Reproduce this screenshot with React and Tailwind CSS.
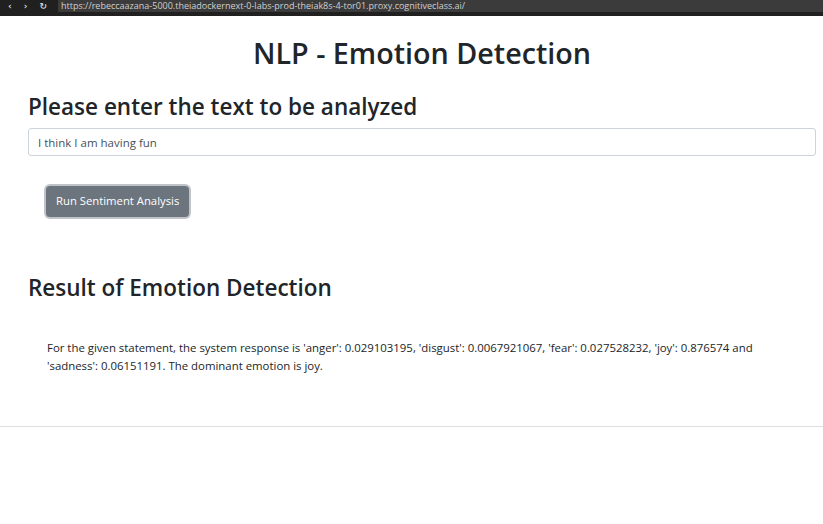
export default function App() {
  return (
    <div className="min-h-[524px] bg-white font-['Open_Sans',sans-serif] text-[#212529]">
      {/* browser chrome strip */}
      <div className="flex h-[16px] items-start bg-[#202020]">
        <div className="flex h-[12px] w-[58px] items-center gap-[12px] pl-[8px] font-['DejaVu_Sans',sans-serif] text-[9px] font-bold leading-[12px] text-[#d0d0d0]">
          <span>‹</span>
          <span>›</span>
          <span>↻</span>
        </div>
        <div className="flex h-[12px] flex-1 items-center bg-[#3b3b3b] pl-[3px] text-[9px] leading-[12px] text-[#cfcfcf]">
          https://rebeccaazana-5000.theiadockernext-0-labs-prod-theiak8s-4-tor01.proxy.cognitiveclass.ai/
        </div>
      </div>

      <div className="pl-[28px] pr-[7px]">
        <h1 className="pt-[19px] text-center text-[28.7px] font-semibold leading-[36px]">NLP - Emotion Detection</h1>

        <h2 className="mt-[22px] text-[22.5px] font-semibold leading-[28px]">Please enter the text to be analyzed</h2>
        <input
          type="text"
          defaultValue="I think I am having fun"
          className="mt-[7px] block h-[28px] w-full rounded-[3px] border border-[#ced4da] px-[9px] text-[11.5px] text-[#495057]"
        />

        <div className="pl-[18px] pt-[30px]">
          <button className="h-[31px] rounded-[4px] bg-[#6c757d] px-[10px] text-[11.3px] text-white shadow-[0_0_0_2px_rgba(130,138,145,0.5)]">
            Run Sentiment Analysis
          </button>
        </div>

        <h2 className="mt-[57px] text-[22.5px] font-semibold leading-[28px]">Result of Emotion Detection</h2>

        <p className="mt-[37px] px-[19px] text-[11.4px] leading-[18px]">
          For the given statement, the system response is 'anger': 0.029103195, 'disgust': 0.0067921067, 'fear': 0.027528232, 'joy': 0.876574 and 'sadness': 0.06151191. The dominant emotion is joy.
        </p>
      </div>

      <hr className="mt-[51px] border-t border-[#dedede]" />
    </div>
  )
}
